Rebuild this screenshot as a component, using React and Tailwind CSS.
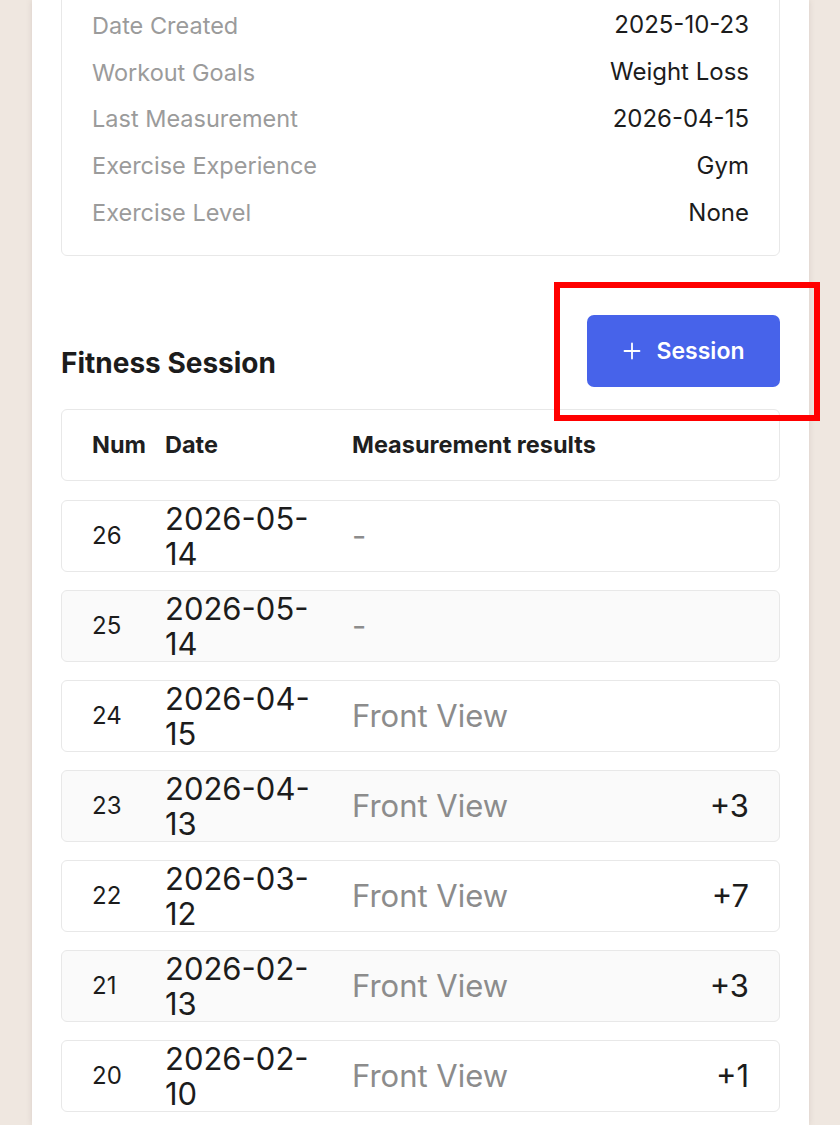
import React from "react";

const info = [
  ["Date Created", "2025-10-23"],
  ["Workout Goals", "Weight Loss"],
  ["Last Measurement", "2026-04-15"],
  ["Exercise Experience", "Gym"],
  ["Exercise Level", "None"],
];

const sessions = [
  { n: 26, d: "2026-05-14", m: "-", c: "" },
  { n: 25, d: "2026-05-14", m: "-", c: "" },
  { n: 24, d: "2026-04-15", m: "Front View", c: "" },
  { n: 23, d: "2026-04-13", m: "Front View", c: "+3" },
  { n: 22, d: "2026-03-12", m: "Front View", c: "+7" },
  { n: 21, d: "2026-02-13", m: "Front View", c: "+3" },
  { n: 20, d: "2026-02-10", m: "Front View", c: "+1" },
];

export default function App() {
  return (
    <div
      className="relative min-h-[1125px] h-[1125px] overflow-hidden bg-[#efe7e0] flex"
      style={{ fontFamily: "Inter, 'Noto Sans', sans-serif" }}
    >
      <div className="ml-[32px] w-[777px] bg-white shadow-[0_0_6px_rgba(120,100,90,0.18)] px-[29px] flex flex-col">
        {/* Info card */}
        <div className="-mt-[20px] border border-[#e8e8e8] rounded-[6px] px-[30px] pt-[21px] pb-[19px] flex flex-col">
          {info.map(([k, v]) => (
            <div key={k} className="h-[46.8px] flex items-center justify-between">
              <span className="text-[23.5px] text-[#9b9b9b]">{k}</span>
              <span className="text-[24px] text-[#1c1c1c]">{v}</span>
            </div>
          ))}
        </div>

        {/* Section header */}
        <div className="mt-[59px] flex items-start justify-between">
          <h2 className="mt-[32px] text-[28px] leading-[33px] font-bold text-[#1c1c1c]">
            Fitness Session
          </h2>
          <button className="w-[193px] h-[72px] rounded-[7px] bg-[#4763ea] text-white flex items-center justify-center gap-[16px] text-[23px] font-semibold">
            <svg width="18" height="18" viewBox="0 0 18 18" fill="none" stroke="white" strokeWidth="1.8" strokeLinecap="round">
              <path d="M9 1.5v15M1.5 9h15" />
            </svg>
            <span>Session</span>
          </button>
        </div>

        {/* Table header */}
        <div className="mt-[22px] h-[72px] border border-[#e8e8e8] rounded-[6px] px-[30px] grid grid-cols-[73px_187px_1fr] items-center text-[23.5px] font-bold text-[#1f1f1f]">
          <span>Num</span>
          <span>Date</span>
          <span>Measurement results</span>
        </div>

        {/* Rows */}
        <div className="mt-[19px] flex flex-col gap-[18px]">
          {sessions.map((s, i) => (
            <div
              key={s.n}
              className={
                "h-[72px] border border-[#e8e8e8] rounded-[6px] px-[30px] grid grid-cols-[73px_187px_1fr] items-center " +
                (i % 2 === 1 ? "bg-[#fafafa]" : "bg-white")
              }
            >
              <span className="text-[24px] text-[#1c1c1c]">{s.n}</span>
              <span className="text-[31px] leading-[35px] text-[#1c1c1c]">
                {s.d.slice(0, 8)}
                <br />
                {s.d.slice(8)}
              </span>
              <div className="flex items-center justify-between text-[31px]">
                <span className="text-[#8c8c8c]">{s.m}</span>
                <span className="text-[#1c1c1c]">{s.c}</span>
              </div>
            </div>
          ))}
        </div>
      </div>

      {/* annotation box */}
      <div className="absolute left-[554px] top-[282px] w-[266px] h-[139px] border-[6px] border-[#ff0000] pointer-events-none" />
    </div>
  );
}
